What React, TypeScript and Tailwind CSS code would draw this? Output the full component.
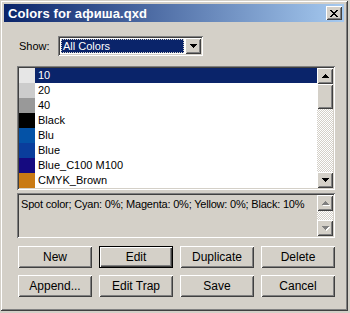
import React from "react";

const raised =
  "shadow-[inset_1px_1px_0_#ffffff,inset_-1px_-1px_0_#404040,inset_2px_2px_0_#d4d0c8,inset_-2px_-2px_0_#808080]";
const sunken =
  "shadow-[inset_1px_1px_0_#808080,inset_-1px_-1px_0_#ffffff,inset_2px_2px_0_#404040,inset_-2px_-2px_0_#d4d0c8]";
const checker =
  "bg-[image:repeating-conic-gradient(#d4d0c8_0_25%,#ffffff_0_50%)] bg-size-[2px_2px]";

function Arrow({ up, disabled }: { up?: boolean; disabled?: boolean }) {
  return (
    <svg width="7" height="4" viewBox="0 0 7 4" className={disabled ? "drop-shadow-[1px_1px_0_#ffffff]" : ""}>
      {up ? (
        <path d="M3 0h1v1h1v1h1v1h1v1H0V3h1V2h1V1h1z" fill={disabled ? "#808080" : "#000"} />
      ) : (
        <path d="M0 0h7v1H6v1H5v1H4v1H3V3H2V2H1V1H0z" fill={disabled ? "#808080" : "#000"} />
      )}
    </svg>
  );
}

function ScrollBtn({ up, disabled }: { up?: boolean; disabled?: boolean }) {
  return (
    <div className={`w-[16px] h-[16px] bg-[#d4d0c8] flex items-center justify-center ${raised}`}>
      <Arrow up={up} disabled={disabled} />
    </div>
  );
}

const rows: { name: string; color: string }[] = [
  { name: "10", color: "#e6e6e6" },
  { name: "20", color: "#cccccc" },
  { name: "40", color: "#999999" },
  { name: "Black", color: "#000000" },
  { name: "Blu", color: "#0452a6" },
  { name: "Blue", color: "#0a3d9c" },
  { name: "Blue_C100 M100", color: "#150a80" },
  { name: "CMYK_Brown", color: "#c97a14" },
];

function Btn({ label, def }: { label: string; def?: boolean }) {
  if (def) {
    return (
      <div className="h-[22px] border border-black">
        <div className="h-full bg-[#d4d0c8] flex items-center justify-center shadow-[inset_1px_1px_0_#ffffff,inset_-1px_-1px_0_#404040,inset_-2px_-2px_0_#808080]">
          {label}
        </div>
      </div>
    );
  }
  return (
    <div className={`h-[22px] bg-[#d4d0c8] flex items-center justify-center ${raised}`}>{label}</div>
  );
}

export default function App() {
  return (
    <div
      className="w-[350px] h-[313px] bg-[#d4d0c8] text-[11px] text-black leading-none"
      style={{ fontFamily: '"Liberation Sans", Arial, sans-serif' }}
    >
      <div className="w-[348px] h-[311px] bg-[#d4d0c8] p-[4px] flex flex-col shadow-[inset_1px_1px_0_#d4d0c8,inset_-1px_-1px_0_#404040,inset_2px_2px_0_#ffffff,inset_-2px_-2px_0_#808080]">
        {/* Title bar */}
        <div className="h-[18px] flex items-center justify-between pl-[4px] pr-[2px] bg-[linear-gradient(to_right,#0a246a,#a6caf0)]">
          <span className="text-white font-bold text-[13px] tracking-[0.1px]">Colors for афиша.qxd</span>
          <div className={`w-[16px] h-[14px] bg-[#d4d0c8] flex items-center justify-center ${raised}`}>
            <svg width="8" height="7" viewBox="0 0 8 7">
              <path
                d="M0 0h2v1h1v1h2V1h1V0h2v1H7v1H6v1H5v1h1v1h1v1h1v1H6V6H5V5H3v1H2v1H0V6h1V5h1V4h1V3H2V2H1V1H0z"
                fill="#000"
              />
            </svg>
          </div>
        </div>

        {/* Body */}
        <div className="flex flex-col pl-[13px] pr-[9px]">
          {/* Show row */}
          <div className="flex items-center mt-[14px] h-[20px]">
            <span className="w-[41px] pl-[2px]">Show:</span>
            <div className={`w-[145px] h-[20px] bg-white flex p-[2px] ${sunken}`}>
              <div className="flex-1 bg-[#0a246a] border border-dotted border-[#d4d0c8] flex items-center pl-[1px] text-white m-[1px]">
                All Colors
              </div>
              <ScrollBtn />
            </div>
          </div>

          {/* List */}
          <div className={`mt-[10px] h-[124px] bg-white flex p-[2px] ${sunken}`}>
            <div className="flex-1 flex flex-col">
              {rows.map((r, i) => (
                <div key={r.name} className="h-[15px] flex">
                  <div className="w-[16px] h-full" style={{ backgroundColor: r.color }} />
                  <div
                    className={`flex-1 flex items-center pl-[3px] ${i === 0 ? "bg-[#0a246a] text-white" : ""}`}
                  >
                    {r.name}
                  </div>
                </div>
              ))}
            </div>
            <div className="w-[16px] flex flex-col">
              <ScrollBtn up />
              <div className={`h-[25px] bg-[#d4d0c8] ${raised}`} />
              <div className={`flex-1 ${checker}`} />
              <ScrollBtn />
            </div>
          </div>

          {/* Description */}
          <div className={`mt-[3px] h-[45px] bg-[#d4d0c8] flex p-[2px] ${sunken}`}>
            <div className="flex-1 pl-[2px] pt-[4px] tracking-[-0.2px]">
              Spot color; Cyan: 0%; Magenta: 0%; Yellow: 0%; Black: 10%
            </div>
            <div className="w-[16px] flex flex-col">
              <ScrollBtn up disabled />
              <div className={`flex-1 ${checker}`} />
              <ScrollBtn disabled />
            </div>
          </div>

          {/* Buttons */}
          <div className="mt-[8px] grid grid-cols-4 gap-x-[7px] gap-y-[7px] pl-[1px] text-[12px]">
            <Btn label="New" />
            <Btn label="Edit" def />
            <Btn label="Duplicate" />
            <Btn label="Delete" />
            <Btn label="Append..." />
            <Btn label="Edit Trap" />
            <Btn label="Save" />
            <Btn label="Cancel" />
          </div>
        </div>
      </div>
    </div>
  );
}
